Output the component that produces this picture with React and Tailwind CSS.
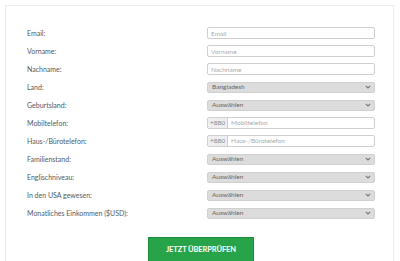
import { useState } from "react";

const rows = [
  { label: "Email:", type: "input", placeholder: "Email" },
  { label: "Vorname:", type: "input", placeholder: "Vorname" },
  { label: "Nachname:", type: "input", placeholder: "Nachname" },
  { label: "Land:", type: "select", value: "Bangladesh" },
  { label: "Geburtsland:", type: "select", value: "Auswählen" },
  { label: "Mobiltelefon:", type: "phone", placeholder: "Mobiltelefon" },
  { label: "Haus-/Bürotelefon:", type: "phone", placeholder: "Haus-/Bürotelefon" },
  { label: "Familienstand:", type: "select", value: "Auswählen" },
  { label: "Englischniveau:", type: "select", value: "Auswählen" },
  { label: "In den USA gewesen:", type: "select", value: "Auswählen" },
  { label: "Monatliches Einkommen ($USD):", type: "select", value: "Auswählen" },
];

const Chevron = () => (
  <svg width="6" height="4" viewBox="0 0 6 4" className="shrink-0">
    <path d="M0.8 0.8 L3 3 L5.2 0.8" fill="none" stroke="#777" strokeWidth="1.1" />
  </svg>
);

const Field = ({ row }) => {
  const [val, setVal] = useState("");
  if (row.type == "select") {
    return (
      <div className="h-[11px] flex items-center justify-between bg-[#dcdcdc] border border-[#d0d0d0] rounded-[2px] pl-[4px] pr-[3px] text-[6.5px] text-[#666]">
        <span>{row.value}</span>
        <Chevron />
      </div>
    );
  }
  if (row.type == "phone") {
    return (
      <div className="h-[12px] flex border border-[#cfcfcf] rounded-[2px] bg-white overflow-hidden">
        <div className="bg-[#eeeeee] border-r border-[#cfcfcf] px-[2px] flex items-center text-[6.5px] text-[#888]">
          +880
        </div>
        <input
          className="flex-1 min-w-0 px-[3px] text-[6.5px] text-[#555] placeholder:text-[#aaa] outline-none"
          placeholder={row.placeholder}
          value={val}
          onChange={(e) => setVal(e.target.value)}
        />
      </div>
    );
  }
  return (
    <input
      className="block w-full h-[12px] border border-[#cfcfcf] rounded-[2px] px-[3px] text-[6.5px] text-[#555] placeholder:text-[#aaa] outline-none bg-white"
      placeholder={row.placeholder}
      value={val}
      onChange={(e) => setVal(e.target.value)}
    />
  );
};

export default function App() {
  return (
    <div className="w-[400px] h-[261px] bg-white overflow-hidden pt-[5px] pl-[5px] pr-[6px]" style={{ fontFamily: "Lato, 'Open Sans', sans-serif" }}>
      <div className="border border-[#ececec] h-[300px] pt-[21px] pl-[21px] pr-[18px]">
        <div className="flex flex-col gap-[6px]">
          {rows.map((row) => (
            <div key={row.label} className="grid grid-cols-[180px_1fr] items-center h-[12px]">
              <div className="text-[7px] leading-[12px] text-[#505a66]">{row.label}</div>
              <Field row={row} />
            </div>
          ))}
        </div>
        <div className="flex justify-center mt-[18px]">
          <button className="w-[106px] h-[25px] bg-[#27a34a] border border-[#1e8a3c] text-white text-[7.5px] font-bold tracking-[-0.1px]">
            JETZT ÜBERPRÜFEN
          </button>
        </div>
      </div>
    </div>
  );
}
